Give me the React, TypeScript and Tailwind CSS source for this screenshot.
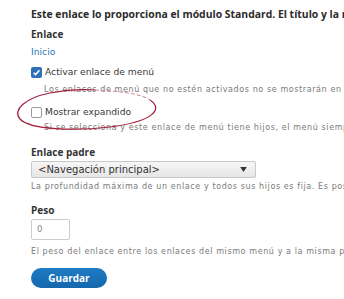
import React from "react";

const body = "font-['DejaVu_Sans','Lucida_Grande',Verdana,sans-serif]";
const bold = "font-['Open_Sans','DejaVu_Sans',sans-serif] font-bold";

function Box({ checked }: { checked?: boolean }) {
  if (checked) {
    return (
      <span className="flex h-[11px] w-[11px] shrink-0 items-center justify-center rounded-[2px] bg-[#2f6fb8]">
        <svg viewBox="0 0 10 10" className="h-[9px] w-[9px]">
          <path d="M1.8 5.2 L4 7.3 L8.3 2.6" fill="none" stroke="#fff" strokeWidth="1.7" />
        </svg>
      </span>
    );
  }
  return <span className="h-[11px] w-[11px] shrink-0 rounded-[2px] border border-[#9a9a9a] bg-white" />;
}

export default function App() {
  return (
    <div className="relative h-[299px] w-[344px] overflow-hidden bg-white text-[#333]">
      <div className="flex flex-col whitespace-nowrap pl-[31px] pt-[6px]">
        <div className={`h-[16px] text-[10.4px] leading-[16px] text-[#2b2b2b] ${bold}`}>
          Este enlace lo proporciona el módulo Standard. El título y la ruta del enlace no se pueden modificar.
        </div>

        <div className={`mt-[4px] h-[16px] text-[10px] leading-[16px] ${bold}`}>Enlace</div>
        <div className={`mt-[2px] h-[16px] text-[9.2px] leading-[16px] text-[#2a76b8] ${body}`}>Inicio</div>

        <label className={`mt-[4px] flex h-[16px] items-center gap-[3px] text-[9.2px] text-[#3a3a3a] ${body}`}>
          <Box checked />
          Activar enlace de menú
        </label>
        <div className={`mt-[2px] h-[16px] pl-[13px] text-[8px] leading-[16px] tracking-[0.6px] text-[#7a7a7a] ${body}`}>
          Los enlaces de menú que no estén activados no se mostrarán en ningún menú.
        </div>

        <label className={`mt-[6px] flex h-[16px] items-center gap-[3px] text-[9.2px] text-[#3a3a3a] ${body}`}>
          <Box />
          Mostrar expandido
        </label>
        <div className={`h-[16px] pl-[13px] text-[8px] leading-[16px] tracking-[0.6px] text-[#7a7a7a] ${body}`}>
          Si se selecciona y este enlace de menú tiene hijos, el menú siempre aparecerá expandido.
        </div>

        <div className={`mt-[8px] h-[16px] text-[10px] leading-[16px] ${bold}`}>Enlace padre</div>
        <div
          className={`mt-[1px] flex h-[17px] w-[225px] items-center justify-between rounded-[2px] border border-[#c8c8c8] bg-gradient-to-b from-[#f6f6f6] to-[#e6e6e6] pl-[6px] pr-[8px] text-[10px] text-[#333] ${body}`}
        >
          <span>&lt;Navegación principal&gt;</span>
          <svg viewBox="0 0 8 6" className="h-[5px] w-[7px]">
            <path d="M0 0 L8 0 L4 6 Z" fill="#333" />
          </svg>
        </div>
        <div className={`mt-[1px] h-[16px] text-[8px] leading-[16px] tracking-[0.6px] text-[#7a7a7a] ${body}`}>
          La profundidad máxima de un enlace y todos sus hijos es fija. Es posible que algunos enlaces no estén disponibles.
        </div>

        <div className={`mt-[7px] h-[16px] text-[10px] leading-[16px] ${bold}`}>Peso</div>
        <div
          className={`mt-[1px] flex h-[21px] w-[39px] items-center rounded-[2px] border border-[#cccccc] bg-white pl-[5px] text-[8.5px] text-[#888] ${body}`}
        >
          0
        </div>
        <div className={`mt-[4px] h-[16px] text-[8px] leading-[16px] tracking-[0.6px] text-[#7a7a7a] ${body}`}>
          El peso del enlace entre los enlaces del mismo menú y a la misma profundidad.
        </div>

        <button
          className={`mt-[8px] flex h-[20px] w-[76px] items-center justify-center rounded-full bg-gradient-to-b from-[#1f7cc4] to-[#1467ad] text-[10px] text-white ${bold}`}
        >
          Guardar
        </button>
      </div>

      {/* hand-drawn annotation round "Mostrar expandido" */}
      <svg className="pointer-events-none absolute left-0 top-0" width="344" height="299" viewBox="0 0 344 299">
        <path
          d="M150 100 C165 110 150 122 110 127 C75 131 30 130 20 119 C12 110 25 98 50 93 C65 90 80 89 95 90"
          fill="none"
          stroke="#a51c3a"
          strokeWidth="1.2"
        />
        <path
          d="M95 90 C120 91 142 94 150 100"
          fill="none"
          stroke="#c98a98"
          strokeWidth="1"
          strokeDasharray="4 2"
        />
      </svg>
    </div>
  );
}
